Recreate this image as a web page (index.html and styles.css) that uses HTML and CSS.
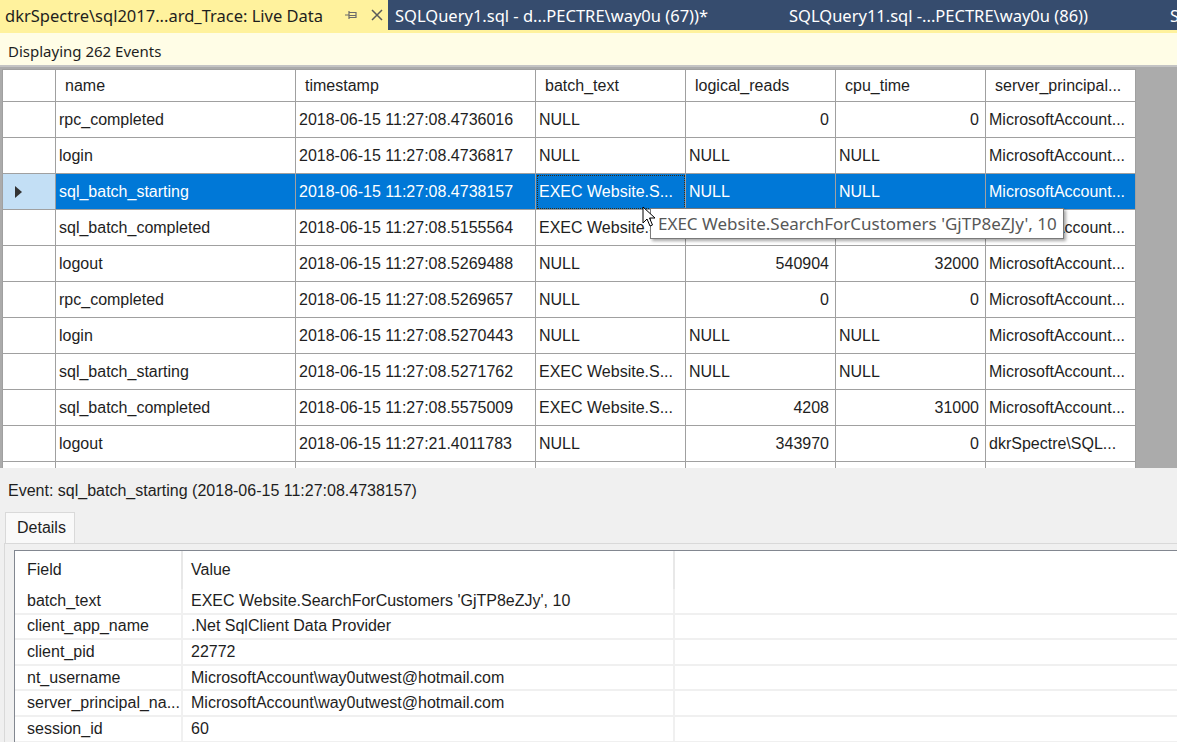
FILE: index.html
```html
<!DOCTYPE html>
<html>
<head>
<meta charset="utf-8">
<link rel="stylesheet" href="styles.css">
</head>
<body>
<div class="tabbar">
  <div class="tab tab-active">
    <span class="tab-title">dkrSpectre\sql2017...ard_Trace: Live Data</span>
    <svg class="pin" width="14" height="12" viewBox="0 0 14 12"><path d="M1 6H5M5 2V10M5 3.5H12V8.5H5" fill="none" stroke="#6b6b6b" stroke-width="1.2"/><path d="M5 6.5H12" stroke="#6b6b6b" stroke-width="1"/></svg>
    <svg class="close" width="14" height="14" viewBox="0 0 14 14"><path d="M2 2L12 12M12 2L2 12" stroke="#5a5a5a" stroke-width="1.5"/></svg>
  </div>
  <div class="tab tab-2">SQLQuery1.sql - d...PECTRE\way0u (67))*</div>
  <div class="tab tab-3">SQLQuery11.sql -...PECTRE\way0u (86))</div>
  <div class="tab tab-4">S</div>
</div>
<div class="infobar">Displaying 262 Events</div>

<div class="grid-area">
  <div class="grid">
    <div class="row head">
      <div class="c rh"></div>
      <div class="c w240">name</div>
      <div class="c w240">timestamp</div>
      <div class="c w150">batch_text</div>
      <div class="c w150">logical_reads</div>
      <div class="c w150">cpu_time</div>
      <div class="c w150">server_principal...</div>
    </div>
    <div class="row">
      <div class="c rh"></div>
      <div class="c w240">rpc_completed</div>
      <div class="c w240">2018-06-15 11:27:08.4736016</div>
      <div class="c w150">NULL</div>
      <div class="c w150 num">0</div>
      <div class="c w150 num">0</div>
      <div class="c w150">MicrosoftAccount...</div>
    </div>
    <div class="row">
      <div class="c rh"></div>
      <div class="c w240">login</div>
      <div class="c w240">2018-06-15 11:27:08.4736817</div>
      <div class="c w150">NULL</div>
      <div class="c w150">NULL</div>
      <div class="c w150">NULL</div>
      <div class="c w150">MicrosoftAccount...</div>
    </div>
    <div class="row sel">
      <div class="c rh"><span class="arrow"></span></div>
      <div class="c w240">sql_batch_starting</div>
      <div class="c w240">2018-06-15 11:27:08.4738157</div>
      <div class="c w150 focus">EXEC Website.S...</div>
      <div class="c w150">NULL</div>
      <div class="c w150">NULL</div>
      <div class="c w150">MicrosoftAccount...</div>
    </div>
    <div class="row">
      <div class="c rh"></div>
      <div class="c w240">sql_batch_completed</div>
      <div class="c w240">2018-06-15 11:27:08.5155564</div>
      <div class="c w150">EXEC Website.S...</div>
      <div class="c w150 num"></div>
      <div class="c w150 num"></div>
      <div class="c w150">MicrosoftAccount...</div>
    </div>
    <div class="row">
      <div class="c rh"></div>
      <div class="c w240">logout</div>
      <div class="c w240">2018-06-15 11:27:08.5269488</div>
      <div class="c w150">NULL</div>
      <div class="c w150 num">540904</div>
      <div class="c w150 num">32000</div>
      <div class="c w150">MicrosoftAccount...</div>
    </div>
    <div class="row">
      <div class="c rh"></div>
      <div class="c w240">rpc_completed</div>
      <div class="c w240">2018-06-15 11:27:08.5269657</div>
      <div class="c w150">NULL</div>
      <div class="c w150 num">0</div>
      <div class="c w150 num">0</div>
      <div class="c w150">MicrosoftAccount...</div>
    </div>
    <div class="row">
      <div class="c rh"></div>
      <div class="c w240">login</div>
      <div class="c w240">2018-06-15 11:27:08.5270443</div>
      <div class="c w150">NULL</div>
      <div class="c w150">NULL</div>
      <div class="c w150">NULL</div>
      <div class="c w150">MicrosoftAccount...</div>
    </div>
    <div class="row">
      <div class="c rh"></div>
      <div class="c w240">sql_batch_starting</div>
      <div class="c w240">2018-06-15 11:27:08.5271762</div>
      <div class="c w150">EXEC Website.S...</div>
      <div class="c w150">NULL</div>
      <div class="c w150">NULL</div>
      <div class="c w150">MicrosoftAccount...</div>
    </div>
    <div class="row">
      <div class="c rh"></div>
      <div class="c w240">sql_batch_completed</div>
      <div class="c w240">2018-06-15 11:27:08.5575009</div>
      <div class="c w150">EXEC Website.S...</div>
      <div class="c w150 num">4208</div>
      <div class="c w150 num">31000</div>
      <div class="c w150">MicrosoftAccount...</div>
    </div>
    <div class="row">
      <div class="c rh"></div>
      <div class="c w240">logout</div>
      <div class="c w240">2018-06-15 11:27:21.4011783</div>
      <div class="c w150">NULL</div>
      <div class="c w150 num">343970</div>
      <div class="c w150 num">0</div>
      <div class="c w150">dkrSpectre\SQL...</div>
    </div>
    <div class="row">
      <div class="c rh"></div>
      <div class="c w240"></div>
      <div class="c w240"></div>
      <div class="c w150"></div>
      <div class="c w150"></div>
      <div class="c w150"></div>
      <div class="c w150"></div>
    </div>
  </div>
  <div class="tooltip">EXEC Website.SearchForCustomers 'GjTP8eZJy', 10</div>
  <svg class="cursor" width="14" height="22" viewBox="0 0 14 22"><path d="M1 1V17L5 13L8 20L10.5 19L7.5 12H13Z" fill="#fff" stroke="#000" stroke-width="1" stroke-linejoin="miter"/></svg>
</div>

<div class="details">
  <div class="event-label">Event: sql_batch_starting (2018-06-15 11:27:08.4738157)</div>
  <div class="dtabs"><div class="dtab">Details</div></div>
  <div class="dpanel">
    <div class="dgrid">
      <div class="drow dhead">
        <div class="dc f">Field</div>
        <div class="dc v">Value</div>
        <div class="dc x"></div>
      </div>
      <div class="drow"><div class="dc f">batch_text</div><div class="dc v">EXEC Website.SearchForCustomers 'GjTP8eZJy', 10</div><div class="dc x"></div></div>
      <div class="drow"><div class="dc f">client_app_name</div><div class="dc v">.Net SqlClient Data Provider</div><div class="dc x"></div></div>
      <div class="drow"><div class="dc f">client_pid</div><div class="dc v">22772</div><div class="dc x"></div></div>
      <div class="drow"><div class="dc f">nt_username</div><div class="dc v">MicrosoftAccount\way0utwest@hotmail.com</div><div class="dc x"></div></div>
      <div class="drow"><div class="dc f">server_principal_na...</div><div class="dc v">MicrosoftAccount\way0utwest@hotmail.com</div><div class="dc x"></div></div>
      <div class="drow"><div class="dc f">session_id</div><div class="dc v">60</div><div class="dc x"></div></div>
    </div>
  </div>
</div>
</body>
</html>
```
FILE: styles.css
```css
* { box-sizing: border-box; }
html, body { margin: 0; padding: 0; }
body {
  width: 1177px;
  height: 742px;
  overflow: hidden;
  font-family: "Liberation Sans", Arial, sans-serif;
  font-size: 16px;
  color: #1e1e1e;
  background: #f0f0f0;
}

.tabbar {
  display: flex;
  height: 33px;
  background: #364c6e;
  border-bottom: 3px solid #fff29d;
  font-family: "Noto Sans", "Open Sans", sans-serif;
  font-size: 16.5px;
  color: #ffffff;
  white-space: nowrap;
  overflow: hidden;
}
.tab {
  flex: none;
  height: 30px;
  display: flex;
  align-items: center;
  padding-left: 7px;
}
.tab-active {
  width: 388px;
  background: #fff29d;
  color: #1e1e1e;
  padding-left: 5px;
}
.tab-title { flex: none; width: 333px; overflow: hidden; }
.pin { margin-left: 6px; }
.close { margin-left: 12px; }
.tab-2 { width: 394px; }
.tab-3 { width: 381px; }
.tab-4 { width: 20px; }

.infobar {
  height: 34px;
  background: #fffde6;
  border-bottom: 2px solid #c4c4c4;
  font-family: "Noto Sans", "Open Sans", sans-serif;
  font-size: 15px;
  color: #1e1e1e;
  padding: 3px 0 0 8px;
  display: flex;
  align-items: center;
}

.grid-area {
  position: relative;
  height: 401px;
  background: #ababab;
  padding: 2px 0 0 2px;
  overflow: hidden;
}
.grid {
  width: 1134px;
  border-left: 1px solid #a0a0a0;
  border-top: 1px solid #a0a0a0;
  background: #ffffff;
}
.row {
  display: flex;
  height: 36px;
}
.row.head { height: 32px; }
.c {
  flex: none;
  height: 100%;
  border-right: 1px solid #a0a0a0;
  border-bottom: 1px solid #a0a0a0;
  padding: 0 3px;
  display: flex;
  align-items: center;
  white-space: nowrap;
  overflow: hidden;
  background: #ffffff;
}
.head .c { padding-left: 9px; }
.rh { width: 53px; }
.w240 { width: 240px; }
.w150 { width: 150px; }
.num { justify-content: flex-end; padding-right: 6px; }

.sel .c { background: #0078d7; color: #ffffff; }
.sel .c.rh { background: #c3dff5; }
.arrow {
  margin-left: 9px;
  width: 0;
  height: 0;
  border-top: 6px solid transparent;
  border-bottom: 6px solid transparent;
  border-left: 7px solid #333333;
}
.focus { outline: 1px dotted #3b2a10; outline-offset: -2px; }

.tooltip {
  position: absolute;
  left: 650px;
  top: 141px;
  width: 414px;
  height: 31px;
  background: #ffffff;
  border: 1px solid #7a7a7a;
  box-shadow: 2px 2px 3px rgba(0,0,0,0.35);
  font-family: "Noto Sans", "Open Sans", sans-serif;
  font-size: 17px;
  color: #575757;
  padding-left: 7px;
  display: flex;
  align-items: center;
  white-space: nowrap;
  overflow: hidden;
}
.cursor {
  position: absolute;
  left: 642px;
  top: 139px;
}

.details {
  height: 274px;
  background: #f0f0f0;
  padding-top: 13px;
}
.event-label {
  padding-left: 8px;
  height: 20px;
  line-height: 20px;
  color: #1e1e1e;
}
.dtabs {
  display: flex;
  margin-top: 11px;
  padding-left: 5px;
}
.dtab {
  height: 31px;
  width: 70px;
  padding-left: 11px;
  display: flex;
  align-items: center;
  background: #f9f9f9;
  border: 1px solid #d9d9d9;
  border-bottom: none;
}
.dpanel {
  margin-left: 4px;
  border-left: 1px solid #d9d9d9;
  border-top: 1px solid #d9d9d9;
  padding: 6px 0 0 9px;
  height: 200px;
}
.dgrid {
  border-left: 1px solid #828790;
  border-top: 1px solid #828790;
  background: #ffffff;
  height: 200px;
}
.drow {
  display: flex;
  height: 25.6px;
  border-bottom: 2px solid #f0f0f0;
}
.drow.dhead { height: 38px; border-bottom: none; }
.dc {
  flex: none;
  display: flex;
  align-items: center;
  white-space: nowrap;
  overflow: hidden;
  border-right: 2px solid #f0f0f0;
}
.dhead .dc { border-right: 2px solid #e8e8e8; }
.dc.f { width: 168px; padding-left: 12px; }
.dc.v { width: 492px; padding-left: 8px; }
.dc.x { flex: 1; border-right: none; }
```
